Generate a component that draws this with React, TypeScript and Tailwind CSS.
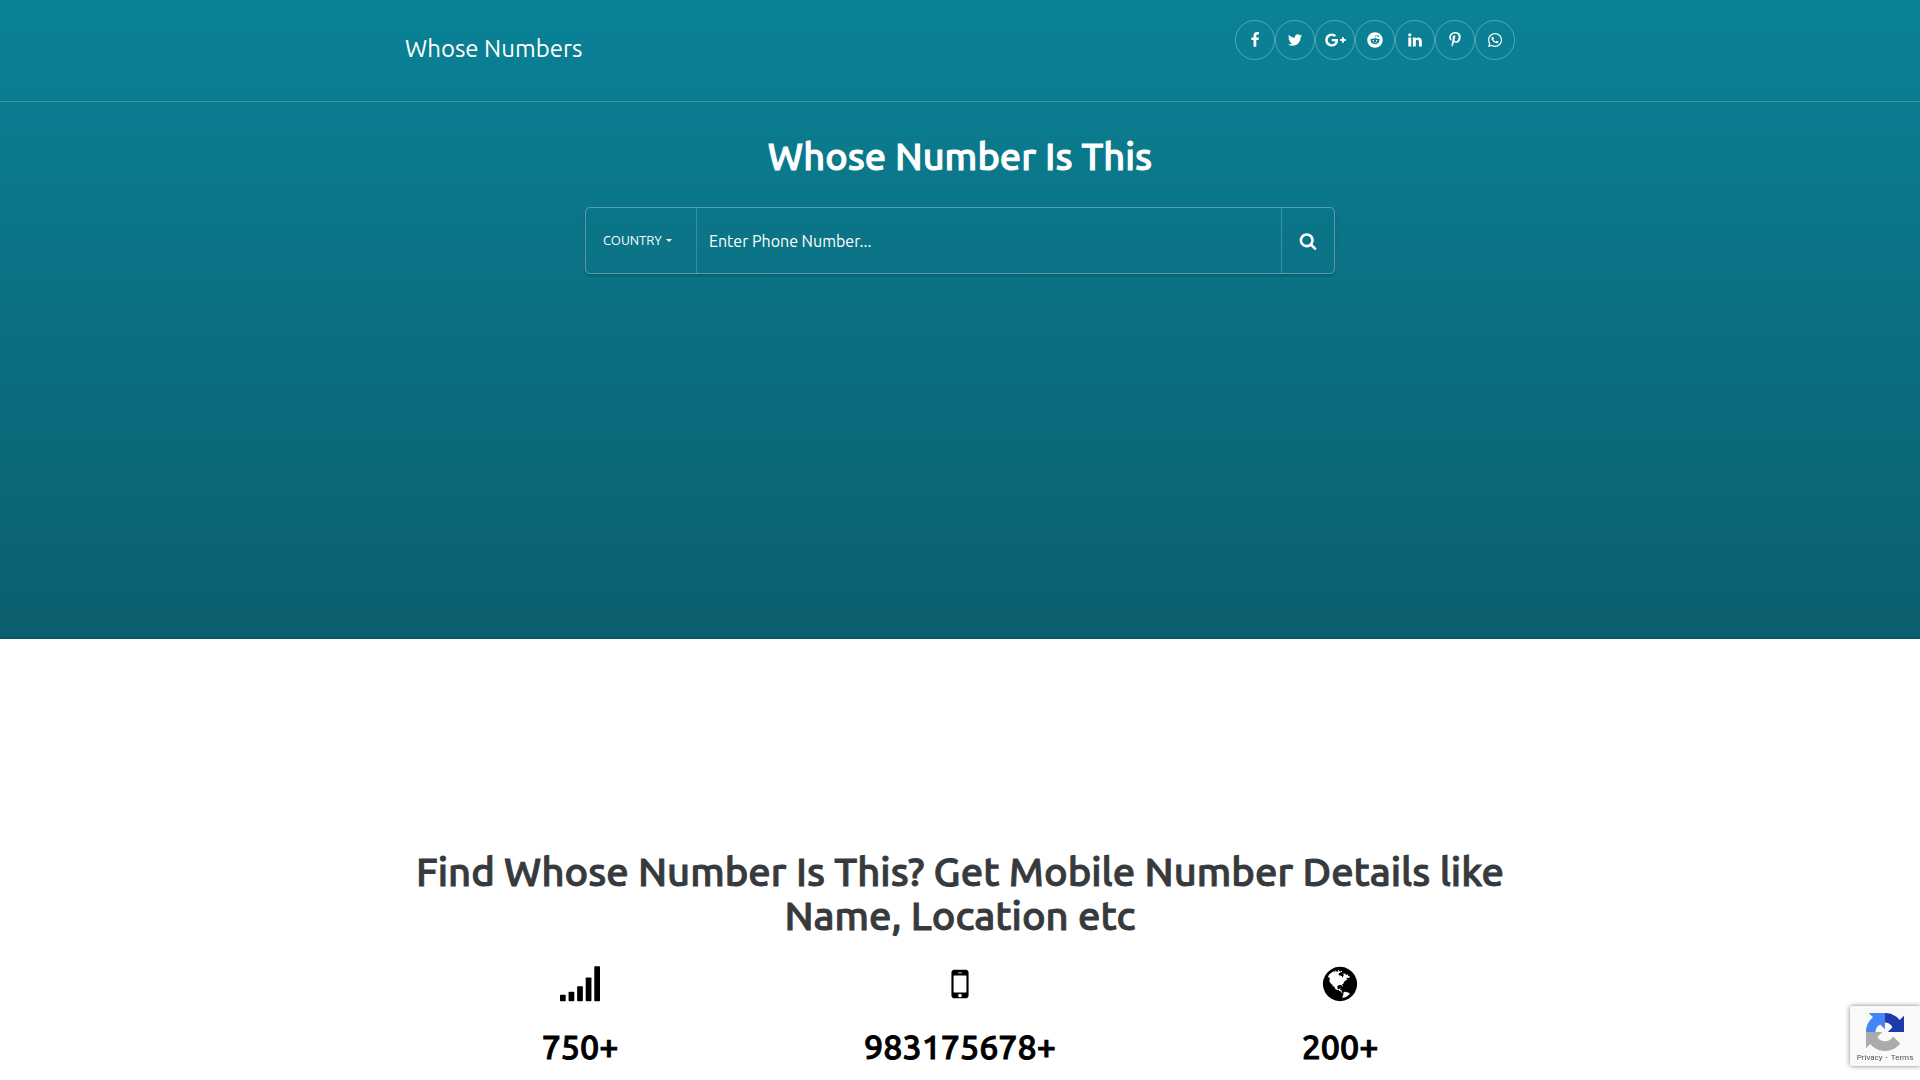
import type { ReactNode } from "react";
import { FaReddit, FaWhatsapp } from "react-icons/fa";

const FACEBOOK =
  "M1343 12v264h-157q-86 0-116 36t-30 108v189h293l-39 296h-254v759h-306v-759h-255v-296h255v-218q0-186 104-288.5t277-102.5q147 0 228 12z";
const TWITTER =
  "M1684 408q-67 98-162 167 1 14 1 42 0 130-38 259.5t-115.5 248.5-184.5 210.5-258 146-323 54.5q-271 0-496-145 35 4 78 4 225 0 401-138-105-2-188-64.5t-114-159.5q33 5 61 5 43 0 85-11-112-23-185.5-111.5t-73.5-205.5v-4q68 38 146 41-66-44-105-115t-39-154q0-88 44-163 121 149 294.5 238.5t371.5 99.5q-8-38-8-74 0-134 94.5-228.5t228.5-94.5q140 0 236 102 109-21 205-78-37 115-142 178 93-10 186-50z";
const GOOGLE_PLUS =
  "M1437 913q0 208-87 370.5t-248 254-369 91.5q-149 0-285-58t-234-156-156-234-58-285 58-285 156-234 234-156 285-58q286 0 491 192l-199 191q-117-113-292-113-123 0-227.5 62t-165.5 168.5-61 232.5 61 232.5 165.5 168.5 227.5 62q83 0 152.5-23t114.5-57.5 78.5-78.5 49-83 21.5-74h-416v-252h692q12 63 12 122zM2304 791v210h-209v209h-210v-209h-209v-210h209v-209h210v209h209z";
const LINKEDIN =
  "M477 625v991h-330v-991h330zm21-306q1 73-50.5 122t-135.5 49h-2q-82 0-132-49t-50-122q0-74 51.5-122.5t134.5-48.5 133 48.5 51 122.5zm1166 729v568h-329v-530q0-105-40.5-164.5t-126.5-59.5q-63 0-105.5 34.5t-63.5 85.5q-11 30-11 81v553h-329q2-399 2-647t-1-296l-1-48h329v144h-2q20-32 41-56t56.5-52 87-43.5 114.5-15.5q171 0 275 113.5t104 332.5z";
const PINTEREST =
  "M256 597q0-108 37.5-203.5t103.5-166.5 152-123 185-78 202-26q158 0 294 66.5t221 193.5 85 287q0 96-19 188t-60 177-100 149.5-145 103-189 38.5q-68 0-135-32t-96-88q-10 39-28 112.5t-23.5 95-20.5 71-26 71-32 62.5-46 77.5-62 86.5l-14 5-9-10q-15-157-15-188 0-92 21.5-206.5t66.5-287.5 52-203q-32-65-32-169 0-83 52-156t132-73q61 0 95 40.5t34 102.5q0 66-44 191t-44 187q0 63 45 104.5t109 41.5q55 0 102-25t78.5-68 56-95 38-110.5 20-111 6.5-99.5q0-173-109.5-269.5t-285.5-96.5q-200 0-334 129.5t-134 328.5q0 44 12.5 85t27 65 27 45.5 12.5 30.5q0 28-15 73t-37 45q-2 0-17-3-51-15-90.5-56t-61-94.5-32.5-108-11-106.5z";
const SEARCH =
  "M1216 832q0-185-131.5-316.5t-316.5-131.5-316.5 131.5-131.5 316.5 131.5 316.5 316.5 131.5 316.5-131.5 131.5-316.5zm512 832q0 52-38 90t-90 38q-54 0-90-38l-343-342q-179 124-399 124-143 0-273.5-55.5t-225-150-150-225-55.5-273.5 55.5-273.5 150-225 225-150 273.5-55.5 273.5 55.5 225 150 150 225 55.5 273.5q0 220-124 399l343 343q37 37 37 90z";
const MOBILE =
  "M976 1408q0-33-23.5-56.5t-56.5-23.5-56.5 23.5-23.5 56.5 23.5 56.5 56.5 23.5 56.5-23.5 23.5-56.5zm208-160v-704q0-13-9.5-22.5t-22.5-9.5h-512q-13 0-22.5 9.5t-9.5 22.5v704q0 13 9.5 22.5t22.5 9.5h512q13 0 22.5-9.5t9.5-22.5zm-192-848q0-16-16-16h-160q-16 0-16 16t16 16h160q16 0 16-16zm288-16v1024q0 52-38 90t-90 38h-512q-52 0-90-38t-38-90v-1024q0-52 38-90t90-38h512q52 0 90 38t38 90z";
const GLOBE =
  "M896 128q209 0 385.5 103t279.5 279.5 103 385.5-103 385.5-279.5 279.5-385.5 103-385.5-103-279.5-279.5-103-385.5 103-385.5 279.5-279.5 385.5-103zm274 521q-2 1-9.5 9.5t-13.5 9.5q2 0 4.5-5t5-11 3.5-7q6-7 22-15 14-6 52-12 34-8 51 11-2-2 9.5-13t14.5-12q3-2 15-4.5t15-7.5l2-22q-12 1-17.5-7t-6.5-21q0 2-6 8 0-7-4.5-8t-11.5 1-9 1q-10-3-15-7.5t-8-16.5-4-15q-2-5-9.5-11t-9.5-10q-1-2-2.5-5.5t-3-6.5-4-5.5-5.5-2.5-7 5-7.5 10-4.5 5q-3-2-6-1.5t-4.5 1-4.5 3-5 3.5q-3 2-8.5 3t-8.5 2q15-5-1-11-10-4-16-3 9-4 7.5-12t-8.5-14h5q-1-4-8.5-8.5t-17.5-8.5-13-6q-8-5-34-9.5t-33-.5q-5 6-4.5 10.5t4 14 3.5 12.5q1 6-5.5 13t-6.5 12q0 7 14 15.5t10 21.5q-3 8-16 16t-16 12q-5 8-1.5 18.5t10.5 16.5q2 2 1.5 4t-3.5 4.5-5.5 4-6.5 3.5l-3 2q-11 5-20.5-6t-13.5-26q-7-25-16-30-23-8-29 1-5-13-41-26-25-9-58-4 6-1 0-15-7-15-19-12 3-6 4-17.5t1-13.5q3-13 12-23 1-1 7-8.5t9.5-13.5.5-6q35 4 50-11 5-5 11.5-17t10.5-17q9-6 14-5.5t14.5 5.5 14.5 5q14 1 15.5-11t-7.5-20q12 1 3-17-4-7-8-9-12-4-27 5-8 4 2 8-1-1-9.5 10.5t-16.5 17.5-16-5q-1-1-5.5-13.5t-9.5-13.5q-8 0-16 15 3-8-11-15t-24-8q19-12-8-27-7-4-20.5-5t-19.5 4q-5 7-5.5 11.5t5 8 10.5 5.5 11.5 4 8.5 3q14 10 8 14-2 1-8.5 3.5t-11.5 4.5-6 4q-3 4 0 14t-2 14q-5-5-9-17.5t-7-16.5q7 9-25 6l-10-1q-4 0-16 2t-20.5 1-13.5-8q-4-8 0-20 1-4 4-2-4-3-11-9.5t-10-8.5q-46 15-94 41 6 1 12-1 5-2 13-6.5t10-5.5q34-14 42-7l5-5q14 16 20 25-7-4-30-1-20 6-22 12 7 12 5 18-4-3-11.5-10t-14.5-11-15-5q-16 0-22 1-146 80-235 222 7 7 12 8 4 1 5 9t2.5 11 11.5-3q9 8 3 19 1-1 44 27 19 17 21 21 3 11-10 18-1-2-9-9t-9-4q-3 5 .5 18.5t10.5 12.5q-7 0-9.5 16t-2.5 35.5-1 23.5l2 1q-3 12 5.5 34.5t21.5 19.5q-13 3 20 43 6 8 8 9 3 2 12 7.5t15 10 10 10.5q4 5 10 22.5t14 23.5q-2 6 9.5 20t10.5 23q-1 0-2.5 1t-2.5 1q3 7 15.5 14t15.5 13q1 3 2 10t3 11 8 2q2-20-24-62-15-25-17-29-3-5-5.5-15.5t-4.5-14.5q2 0 6 1.5t8.5 3.5 7.5 4 2 3q-3 7 2 17.5t12 18.5 17 19 12 13q6 6 14 19.5t0 13.5q9 0 20 10.5t17 19.5q5 8 8 26t5 24q2 7 8.5 13.5t12.5 9.5l16 8 13 7q5 2 18.5 10.5t21.5 11.5q10 4 16 4t14.5-2.5 13.5-3.5q15-2 29 15t21 21q36 19 55 11-2 1 .5 7.5t8 15.5 9 14.5 5.5 8.5q5 6 18 15t18 15q6-4 7-9-3 8 7 20t18 10q14-3 14-32-31 15-49-18 0-1-2.5-5.5t-4-8.5-2.5-8.5 0-7.5 5-3q9 0 10-3.5t-2-12.5-4-13q-1-8-11-20t-12-15q-5 9-16 8t-16-9q0 1-1.5 5.5t-1.5 6.5q-13 0-15-1 1-3 2.5-17.5t3.5-22.5q1-4 5.5-12t7.5-14.5 4-12.5-4.5-9.5-17.5-2.5q-19 1-26 20-1 3-3 10.5t-5 11.5-9 7q-7 3-24 2t-24-5q-13-8-22.5-29t-9.5-37q0-10 2.5-26.5t3-25-5.5-24.5q3-2 9-9.5t10-10.5q2-1 4.5-1.5t4.5 0 4-1.5 3-6q-1-1-4-3-3-3-4-3 7 3 28.5-1.5t27.5 1.5q15 11 22-2 0-1-2.5-9.5t-.5-13.5q5 27 29 9 3 3 15.5 5t17.5 5q3 2 7 5.5t5.5 4.5 5-.5 8.5-6.5q10 14 12 24 11 40 19 44 7 3 11 2t4.5-9.5 0-14-1.5-12.5l-1-8v-18l-1-8q-15-3-18.5-12t1.5-18.5 15-18.5q1-1 8-3.5t15.5-6.5 12.5-8q21-19 15-35 7 0 11-9-1 0-5-3t-7.5-5-4.5-2q9-5 2-16 5-3 7.5-11t7.5-10q9 12 21 2 7-8 1-16 5-7 20.5-10.5t18.5-9.5q7 2 8-2t1-12 3-12q4-5 15-9t13-5l17-11q3-4 0-4 18 2 31-11 10-11-6-20 3-6-3-9.5t-15-5.5q3-1 11.5-.5t10.5-1.5q15-10-7-16-17-5-43 12zm-163 877q206-36 351-189-3-3-12.5-4.5t-12.5-3.5q-18-7-24-8 1-7-2.5-13t-8-9-12.5-8-11-7q-2-2-7-6t-7-5.5-7.5-4.5-8.5-2-10 1l-3 1q-3 1-5.5 2.5t-5.5 3-4 3 0 2.5q-21-17-36-22-5-1-11-5.5t-10.5-7-10-1.5-11.5 7q-5 5-6 15t-2 13q-7-5 0-17.5t2-18.5q-3-6-10.5-4.5t-12 4.5-11.5 8.5-9 6.5-8.5 5.5-8.5 7.5q-3 4-6 12t-5 11q-2-4-11.5-6.5t-9.5-5.5q2 10 4 35t5 38q7 31-12 48-27 25-29 40-4 22 12 26 0 7-8 20.5t-7 21.5q0 6 2 16z";

function Glyph({ d, className, box = "0 0 1792 1792" }: { d: string; className: string; box?: string }) {
  return (
    <svg viewBox={box} fill="currentColor" className={className} aria-hidden="true">
      <path d={d} />
    </svg>
  );
}

const SOCIAL: { name: string; icon: ReactNode }[] = [
  { name: "Facebook", icon: <Glyph d={FACEBOOK} className="size-4" /> },
  { name: "Twitter", icon: <Glyph d={TWITTER} className="size-4" /> },
  { name: "Google Plus", icon: <Glyph d={GOOGLE_PLUS} box="0 0 2304 1792" className="h-4 w-[21px]" /> },
  { name: "Reddit", icon: <FaReddit className="size-4" /> },
  { name: "LinkedIn", icon: <Glyph d={LINKEDIN} className="size-4" /> },
  { name: "Pinterest", icon: <Glyph d={PINTEREST} className="size-4" /> },
  { name: "WhatsApp", icon: <FaWhatsapp className="size-4" /> },
];

function SignalIcon() {
  return (
    <svg viewBox="0 0 1792 1792" fill="currentColor" className="size-10" aria-hidden="true">
      <rect x="0" y="1376" width="256" height="288" rx="32" />
      <rect x="384" y="1248" width="256" height="416" rx="32" />
      <rect x="768" y="992" width="256" height="672" rx="32" />
      <rect x="1152" y="608" width="256" height="1056" rx="32" />
      <rect x="1536" y="96" width="256" height="1568" rx="32" />
    </svg>
  );
}

const STATS: { value: string; icon: ReactNode }[] = [
  { value: "750+", icon: <SignalIcon /> },
  { value: "983175678+", icon: <Glyph d={MOBILE} className="size-10" /> },
  { value: "200+", icon: <Glyph d={GLOBE} className="size-10" /> },
];

function Header() {
  return (
    <header className="border-b border-white/20">
      <div className="mx-auto flex h-[101px] max-w-[1140px] items-start justify-between px-[15px] pt-5">
        <a href="#" className="pt-[13px] text-2xl leading-8">
          Whose Numbers
        </a>
        <nav aria-label="Share" className="flex">
          {SOCIAL.map((s) => (
            <a
              key={s.name}
              href="#"
              aria-label={s.name}
              className="flex size-10 items-center justify-center rounded-full border border-white/30"
            >
              {s.icon}
            </a>
          ))}
        </nav>
      </div>
    </header>
  );
}

function SearchForm() {
  return (
    <form
      onSubmit={(e) => e.preventDefault()}
      className="mx-auto flex h-[67px] max-w-[750px] rounded-[5px] border border-white/30 shadow-[0_2px_3px_rgba(0,0,0,0.2)]"
    >
      <label className="flex w-[111px] items-center border-r border-white/20 pl-[17px] text-[13px]">
        <select aria-label="Country" className="appearance-none bg-transparent uppercase outline-none">
          <option>Country</option>
        </select>
        <svg viewBox="0 0 6 3" fill="currentColor" className="ml-1 h-[3px] w-[6px]" aria-hidden="true">
          <path d="M0 0h6L3 3z" />
        </svg>
      </label>
      <input
        type="tel"
        aria-label="Phone number"
        placeholder="Enter Phone Number..."
        className="min-w-0 flex-1 bg-transparent px-3 text-base outline-none placeholder:text-white"
      />
      <button
        type="submit"
        aria-label="Search"
        className="flex w-[53px] items-center justify-center border-l border-white/20"
      >
        <Glyph d={SEARCH} className="size-[18px]" />
      </button>
    </form>
  );
}

function RecaptchaBadge() {
  return (
    <aside className="fixed right-0 bottom-[14px] flex h-[60px] w-[70px] flex-col items-center rounded-l-xs bg-[#f9f9f9] pt-[7px] shadow-[0_0_5px_gray]">
      <svg viewBox="0 0 64 64" className="size-[38px]" aria-hidden="true">
        <path
          fill="#1c3aa9"
          d="M64 31.955l-.013-1.37V4.687l-7.16 7.16C50.967 4.674 42.033.093 32.03.093c-.34 0-.68.005-1.02.016v15.9c.3-.03.6-.04.9-.04 5.63 0 10.24 3.35 12.7 8.1l-7.86 7.886z"
        />
        <path
          fill="#4285f4"
          d="M31.862.094l-1.37.013H4.594l7.16 7.16C4.58 13.126 0 22.06 0 32.064l.016 1.02h15.9c-.03-.3-.04-.6-.04-.9 0-5.63 3.35-10.24 8.1-12.7l7.886 7.86z"
        />
        <path
          fill="#ababab"
          d="M.001 32.045l.013 1.37v25.898l7.16-7.16c5.86 7.173 14.794 11.754 24.797 11.754 10.41 0 19.658-4.96 25.507-12.64l-11.737-11.86c-1.15 2.127-2.784 3.954-4.757 5.336-2.05 1.6-4.957 2.91-8.972 2.91-.485 0-.86-.057-1.135-.164-4.975-.393-9.287-3.138-11.826-7.123l8.307-8.308z"
        />
      </svg>
      <div className="flex gap-[3px] font-['Roboto',sans-serif] text-[8px] leading-[14px] text-[#555]">
        <a href="#">Privacy</a>
        <span>-</span>
        <a href="#">Terms</a>
      </div>
    </aside>
  );
}

export default function App() {
  return (
    <div className="bg-white font-['Ubuntu','Noto_Sans',sans-serif]">
      <div className="min-h-[639px] bg-linear-to-b from-[#0a8296] to-[#0b5e6e] text-white shadow-[inset_0_-2px_0_rgba(0,0,0,0.06)]">
        <Header />
        <main className="px-[15px] pt-[30px]">
          <h1 className="mb-[27px] text-center text-[38px] leading-12 font-medium [-webkit-text-stroke:1px]">
            Whose Number Is This
          </h1>
          <SearchForm />
        </main>
      </div>

      <section className="mx-auto max-w-[1140px] pt-[211px] font-medium [-webkit-text-stroke:1px]">
        <h2 className="px-[15px] text-center text-[40px] leading-11 text-[#373a3c]">
          Find Whose Number Is This? Get Mobile Number Details like Name, Location etc
        </h2>
        <div className="mt-[26px] grid grid-cols-3 text-black">
          {STATS.map((s) => (
            <div key={s.value} className="flex flex-col items-center">
              {s.icon}
              <p className="mt-[22px] text-[34px] leading-10">{s.value}</p>
            </div>
          ))}
        </div>
      </section>

      <RecaptchaBadge />
    </div>
  );
}
